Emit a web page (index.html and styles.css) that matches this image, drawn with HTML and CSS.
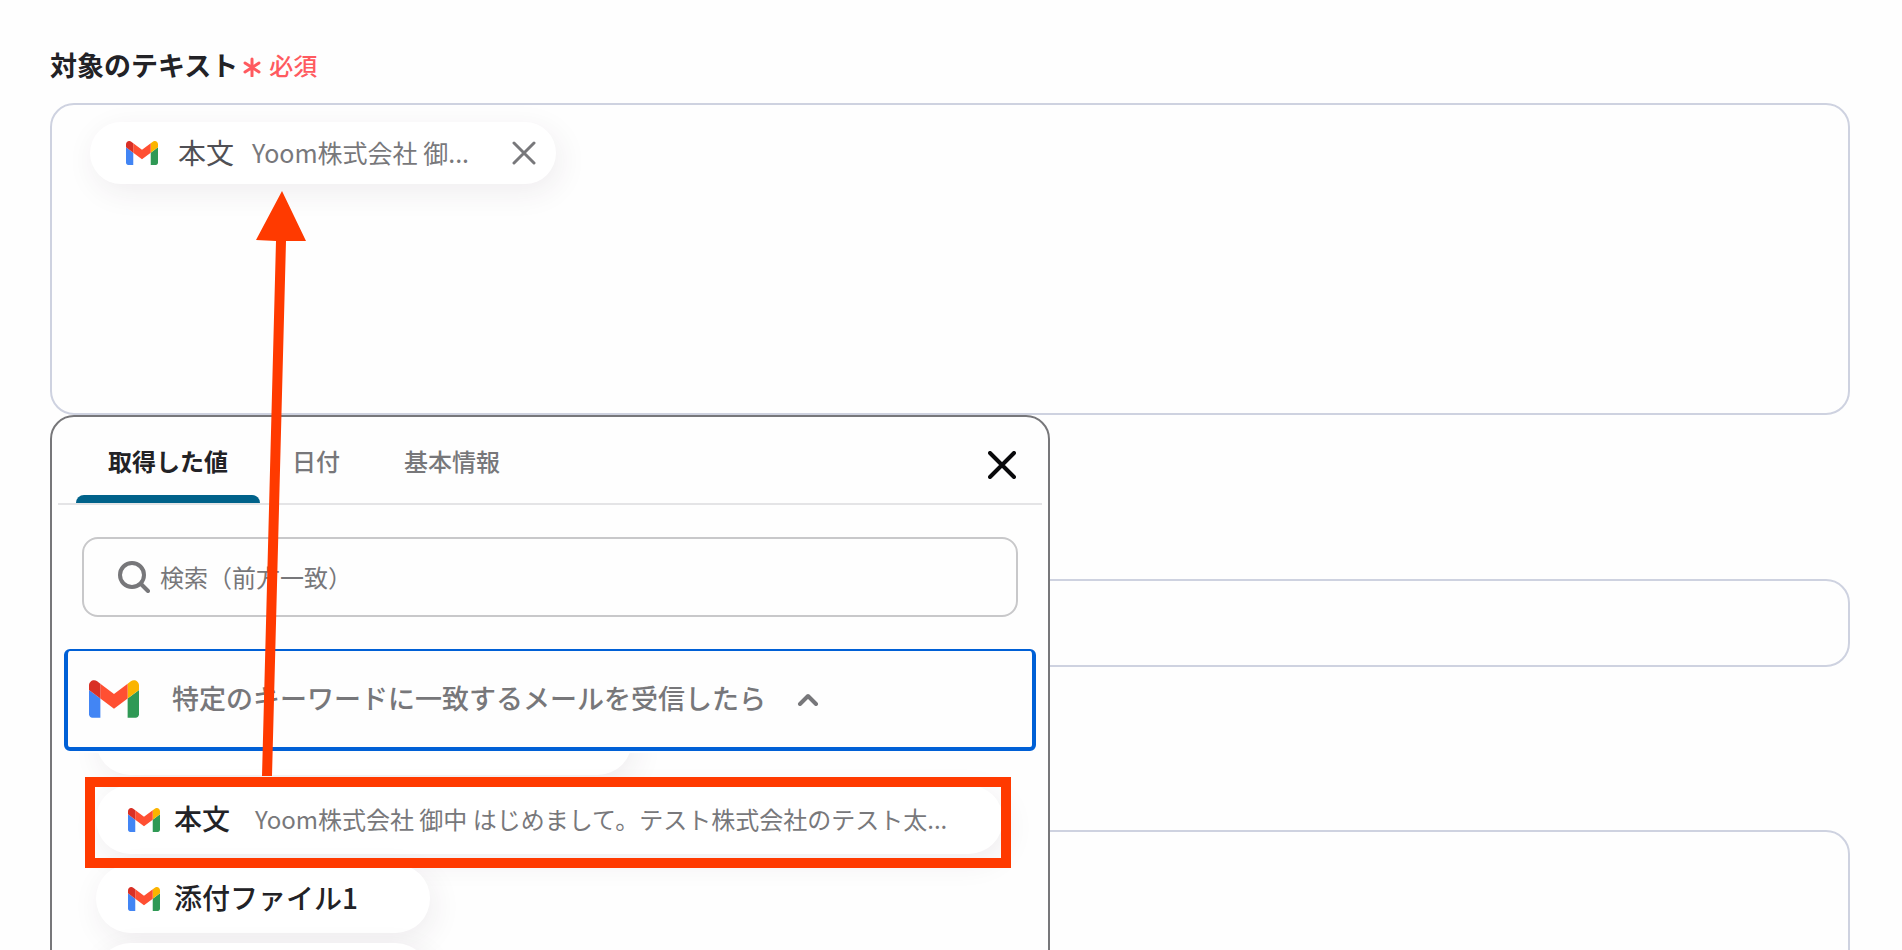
FILE: index.html
```html
<!DOCTYPE html>
<html lang="ja">
<head>
  <meta charset="UTF-8" />
  <meta name="viewport" content="width=device-width, initial-scale=1" />
  <title>対象のテキスト</title>
  <link rel="stylesheet" href="styles.css">
</head>
<body>

  <!-- Gmail logo, reused by every chip -->
  <svg class="sprite" aria-hidden="true">
    <symbol id="gmail" viewBox="52 42 88 66">
      <path fill="#4285f4" d="M58 108h14V74L52 59v43c0 3.32 2.69 6 6 6"/>
      <path fill="#2f9955" d="M120 108h14c3.32 0 6-2.69 6-6V59l-20 15"/>
      <path fill="#fbb400" d="M120 48v26l20-15v-8c0-7.42-8.47-11.65-14.4-7.2"/>
      <path fill="#ff4f32" d="M72 74V48l24 18 24-18v26L96 92"/>
      <path fill="#d93025" d="M52 51v8l20 15V48l-5.600-4.200c-5.940-4.450-14.400-.22-14.400 7.200"/>
    </symbol>
  </svg>

  <main class="page">
    <div class="field">
      <div class="field-label" id="targetLabel">
        <span>対象のテキスト</span>
        <span class="required">
          <svg class="asterisk" viewBox="0 0 18 20" aria-hidden="true"><path d="M9 2v17M2 6l14 9M16 6L2 15"/></svg>
          必須
        </span>
      </div>

      <div class="editor-wrap">
        <div class="box editor" role="textbox" aria-multiline="true" aria-labelledby="targetLabel" tabindex="0">
          <div class="token">
            <svg class="logo-sm"><use href="#gmail"/></svg>
            <span class="token-name">本文</span>
            <span class="token-value">Yoom株式会社 御...</span>
            <button type="button" class="icon-btn token-close" aria-label="削除">
              <svg viewBox="0 0 24 24"><path d="M2 2l20 20M22 2L2 22"/></svg>
            </button>
          </div>
        </div>

        <div class="picker" id="picker">
          <div class="picker-head">
            <div class="tabs" role="tablist">
              <button type="button" class="tab active" role="tab" aria-selected="true">取得した値</button>
              <button type="button" class="tab" role="tab" aria-selected="false">日付</button>
              <button type="button" class="tab" role="tab" aria-selected="false">基本情報</button>
            </div>
            <button type="button" class="icon-btn picker-close" aria-label="閉じる">
              <svg viewBox="0 0 28 28"><path d="M2 2l24 24M26 2L2 26"/></svg>
            </button>
          </div>

          <label class="search">
            <svg viewBox="0 0 32 32" aria-hidden="true"><circle cx="14" cy="14" r="12"/><path d="M23 23l7 7"/></svg>
            <input type="search" placeholder="検索（前方一致）" aria-label="検索（前方一致）" />
          </label>

          <button type="button" class="group" aria-expanded="true">
            <svg class="logo-lg"><use href="#gmail"/></svg>
            <span>特定のキーワードに一致するメールを受信したら</span>
            <svg class="chevron" viewBox="0 0 22 14" aria-hidden="true"><path d="M3 12l8-8 8 8"/></svg>
          </button>

          <div class="chips-view">
            <div class="chips">
              <button type="button" class="chip wide" aria-label="件名"></button>
              <button type="button" class="chip">
                <svg class="logo-sm"><use href="#gmail"/></svg>
                <span class="chip-name">本文</span>
                <span class="chip-value">Yoom株式会社 御中 はじめまして。テスト株式会社のテスト太...</span>
              </button>
              <button type="button" class="chip short">
                <svg class="logo-sm"><use href="#gmail"/></svg>
                <span class="chip-name">添付ファイル1</span>
              </button>
              <button type="button" class="chip short" aria-label="添付ファイル"></button>
            </div>
          </div>
        </div>
      </div>
    </div>

    <input type="text" class="box line-input" aria-label="抽出したい項目" />
    <textarea class="box area-input" aria-label="指示内容"></textarea>
  </main>

  <!-- arrow from the chip in the list up to the token -->
  <div class="highlight"></div>
  <svg class="arrow" viewBox="0 0 50 585" aria-hidden="true">
    <path d="M26 0L50 50H30L16 585H6L20 50L0 49z"/>
  </svg>

</body>
</html>
```

FILE: styles.css
```css
* {
  box-sizing: border-box;
}

body {
  margin: 0;
  height: 100vh;
  overflow: hidden;
  position: relative;
  background-color: #fefefe;
  color: #222226;
  font-family: 'Noto Sans CJK JP', sans-serif;
  font-size: 24px;
}

button,
input,
textarea {
  font: inherit;
  color: inherit;
}

button {
  padding: 0;
  border: none;
  background: none;
  cursor: pointer;
}

svg {
  display: block;
  flex: none;
  fill: none;
  stroke-linecap: round;
  stroke-linejoin: round;
}

.sprite {
  position: absolute;
  width: 0;
  height: 0;
}

.page {
  height: 100vh;
  overflow: hidden;
  padding: 44px 52px 0 50px;
}

.field-label {
  display: flex;
  align-items: center;
  gap: 5px;
  height: 40px;
  margin-bottom: 19px;
  font-size: 27px;
  font-weight: 700;
}

.required {
  display: flex;
  align-items: center;
  gap: 8px;
  color: #ff5a5f;
  font-size: 24px;
  font-weight: 500;
}

.asterisk {
  width: 18px;
  height: 20px;
  margin-top: 6px;
  stroke: #ff5a5f;
  stroke-width: 3;
}

.box {
  display: block;
  width: 100%;
  border: 2px solid #ced2e0;
  border-radius: 24px;
  background-color: #fefefe;
}

.editor-wrap {
  position: relative;
}

.editor {
  min-height: 312px;
  padding: 17px 38px;
}

.line-input {
  height: 88px;
  margin: 164px 0 163px;
  padding: 0 38px;
}

.area-input {
  height: 312px;
  resize: none;
}

.token {
  display: inline-flex;
  align-items: center;
  height: 62px;
  padding: 0 20px 0 36px;
  border-radius: 31px;
  background-color: #fff;
  box-shadow: 4px 8px 30px rgba(60, 40, 70, 0.08);
}

.logo-sm {
  width: 32px;
  height: 24px;
}

.logo-lg {
  width: 50px;
  height: 38px;
}

.token-name,
.token-value,
.chip-name,
.chip-value,
.group span {
  padding-bottom: 3px;
  white-space: nowrap;
}

.token-name {
  margin: 0 18px 0 20px;
  color: #505055;
  font-size: 28px;
}

.token-value {
  color: #78787b;
  font-size: 25px;
}

.chip-value {
  color: #78787b;
}

.icon-btn svg {
  width: 100%;
  height: 100%;
}

.token-close {
  width: 24px;
  height: 24px;
  margin-left: 43px;
  stroke: #78787b;
  stroke-width: 3;
}

.picker {
  position: absolute;
  top: 100%;
  left: 0;
  width: 100%;
  max-width: 1000px;
  padding: 0 6px 24px;
  border: 2px solid #77777a;
  border-radius: 24px;
  background-color: #fefefe;
}

.picker-head {
  display: flex;
  justify-content: space-between;
  padding: 0 26px 0 18px;
  border-bottom: 2px solid #e4e4e6;
}

.tabs {
  display: flex;
}

.tab {
  position: relative;
  height: 86px;
  padding: 0 32px;
  color: #77777a;
  font-weight: 500;
}

.tab.active {
  color: #222226;
  font-weight: 700;
}

.tab.active::after {
  content: '';
  position: absolute;
  left: 0;
  right: 0;
  bottom: 0;
  height: 8px;
  border-radius: 8px 8px 0 0;
  background-color: #00628a;
}

.picker-close {
  width: 28px;
  height: 28px;
  margin-top: 34px;
  stroke: #09090b;
  stroke-width: 4;
}

.search {
  display: flex;
  align-items: center;
  gap: 10px;
  height: 80px;
  margin: 32px 24px;
  padding: 0 34px;
  border: 2px solid #c8c8ca;
  border-radius: 16px;
}

.search svg {
  width: 32px;
  height: 32px;
  stroke: #77777a;
  stroke-width: 4;
}

.search input {
  flex: 1;
  padding: 0 0 2px;
  border: none;
  outline: none;
  background: none;
}

.search input::placeholder {
  color: #77777a;
  opacity: 1;
}

.group {
  display: flex;
  align-items: center;
  width: calc(100% - 12px);
  height: 102px;
  margin: 0 6px;
  padding: 0 21px;
  border: 4px solid #0060d6;
  border-top-width: 2px;
  border-radius: 6px;
  color: #77777a;
  font-size: 27px;
  font-weight: 500;
}

.group span {
  margin: 0 31px 0 33px;
}

.chevron {
  width: 22px;
  height: 14px;
  stroke: #77777a;
  stroke-width: 4;
}

/* list is scrolled, so its first chip is cut at the top */
.chips-view {
  margin-top: 2px;
  overflow: hidden;
}

.chips {
  display: flex;
  flex-direction: column;
  align-items: flex-start;
  gap: 10px;
  margin-top: -47px;
  padding: 0 38px;
}

.chip {
  display: flex;
  align-items: center;
  height: 69px;
  padding: 0 56px 0 32px;
  border-radius: 35px;
  background-color: #fff;
  box-shadow: 4px 8px 30px rgba(60, 40, 70, 0.08);
}

.chip.wide {
  width: 536px;
}

.chip.short {
  width: 334px;
}

.chip-name {
  margin: 0 25px 0 14px;
  color: #222226;
  font-size: 28px;
  font-weight: 500;
}

.highlight {
  position: absolute;
  top: 777px;
  left: 85px;
  width: 926px;
  height: 91px;
  border: 10px solid #ff3a00;
  pointer-events: none;
}

.arrow {
  position: absolute;
  top: 191px;
  left: 256px;
  width: 50px;
  height: 585px;
  fill: #ff3a00;
  pointer-events: none;
}
```
